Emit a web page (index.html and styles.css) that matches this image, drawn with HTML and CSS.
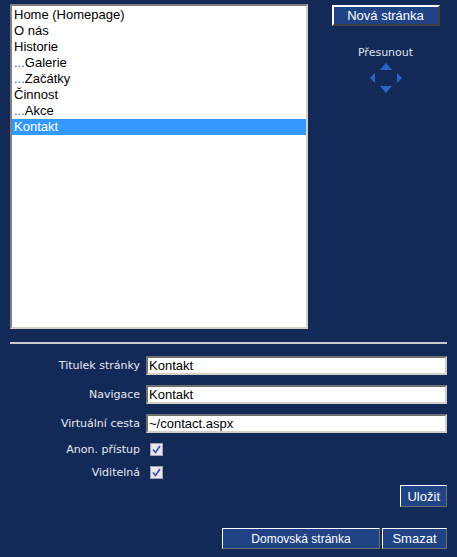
FILE: index.html
```html
<!DOCTYPE html>
<html lang="cs">
<head>
  <meta charset="UTF-8" />
  <title>Stránky webu</title>
  <link rel="stylesheet" href="styles.css">
</head>
<body>
  <div class="page">
    <div class="top">
      <div class="pagelist">
        <div class="item">Home (Homepage)</div>
        <div class="item">O nás</div>
        <div class="item">Historie</div>
        <div class="item"><span class="dots">...</span>Galerie</div>
        <div class="item"><span class="dots">...</span>Začátky</div>
        <div class="item">Činnost</div>
        <div class="item"><span class="dots">...</span>Akce</div>
        <div class="item selected">Kontakt</div>
      </div>

      <div class="side">
        <button class="btn new-btn">Nová stránka</button>
        <div class="move">
          <span class="move-label">Přesunout</span>
          <svg class="arrows" width="40" height="34" viewBox="0 0 40 34">
            <path d="M20 2 L26 9 L14 9 Z" />
            <path d="M4 17 L9 12 L9 22 Z" />
            <path d="M36 17 L31 12 L31 22 Z" />
            <path d="M20 32 L26 25 L14 25 Z" />
          </svg>
        </div>
      </div>
    </div>

    <hr class="divider">

    <div class="props">
      <label class="prop-label" for="title">Titulek stránky</label>
      <input class="prop-input" type="text" id="title" value="Kontakt">

      <label class="prop-label" for="nav">Navigace</label>
      <input class="prop-input" type="text" id="nav" value="Kontakt">

      <label class="prop-label" for="path">Virtuální cesta</label>
      <input class="prop-input" type="text" id="path" value="~/contact.aspx">

      <span class="prop-label">Anon. přístup</span>
      <span class="check">
        <svg width="9" height="9" viewBox="0 0 9 9"><path d="M1 4.5 L3.5 7.5 L8 1" /></svg>
      </span>

      <span class="prop-label">Viditelná</span>
      <span class="check">
        <svg width="9" height="9" viewBox="0 0 9 9"><path d="M1 4.5 L3.5 7.5 L8 1" /></svg>
      </span>
    </div>

    <div class="save-row">
      <button class="btn save-btn">Uložit</button>
    </div>

    <div class="actions">
      <button class="btn home-btn">Domovská stránka</button>
      <button class="btn delete-btn">Smazat</button>
    </div>
  </div>
</body>
</html>
```

FILE: styles.css
```css
body {
  margin: 0;
  background: #132a59;
  font-family: "Liberation Sans", Arial, sans-serif;
}
.page {
  padding: 4px 10px 0 10px;
}

/* Page list + move panel */
.top {
  display: flex;
}
.pagelist {
  width: 294px;
  height: 320px;
  background: white;
  border: 2px solid;
  border-color: #808080 #d4d0c8 #d4d0c8 #808080;
  padding-top: 1px;
  box-sizing: content-box;
}
.item {
  height: 16px;
  line-height: 16px;
  padding-left: 2px;
  font-size: 13px;
  color: #000;
}
.item .dots {
  color: #2c5fbf;
}
.item.selected {
  background: #3399ff;
  color: white;
}
.side {
  flex: 1;
  display: flex;
  flex-direction: column;
  align-items: center;
  padding-top: 1px;
  padding-left: 16px;
}
.btn {
  font-family: "Liberation Sans", Arial, sans-serif;
  font-size: 13px;
  color: white;
  background: #1f4385;
  border: 1px solid;
  border-color: #ffffff #707070 #707070 #ffffff;
  padding: 0 8px;
  height: 22px;
  cursor: pointer;
}
.new-btn {
  width: 108px;
  height: 21px;
  border-width: 2px;
  border-color: #ffffff #404040 #404040 #ffffff;
}
.move {
  display: flex;
  flex-direction: column;
  align-items: center;
  margin-top: 20px;
}
.move-label {
  font-family: "DejaVu Sans", Verdana, sans-serif;
  font-size: 11px;
  color: #dde2ee;
}
.arrows {
  margin-top: 2px;
}
.arrows path {
  fill: #2a66c9;
}

.divider {
  border: none;
  border-top: 2px solid #c8c8c8;
  margin: 13px 0 12px 0;
}

/* Properties */
.props {
  display: grid;
  grid-template-columns: 130px 1fr;
  column-gap: 6px;
  row-gap: 10px;
  align-items: center;
}
.prop-label {
  text-align: right;
  font-family: "DejaVu Sans", Verdana, sans-serif;
  font-size: 11px;
  color: #e6e9f0;
}
.prop-input {
  height: 19px;
  box-sizing: border-box;
  border: 2px solid;
  border-color: #707070 #d4d0c8 #d4d0c8 #707070;
  padding: 0 1px;
  font-family: "Liberation Sans", Arial, sans-serif;
  font-size: 13px;
  color: #000;
  background: white;
}
.check {
  width: 11px;
  height: 11px;
  margin-left: 4px;
  background: #e8e8ec;
  border: 1px solid #a0a4b0;
  display: flex;
  align-items: center;
  justify-content: center;
}
.check path {
  fill: none;
  stroke: #3b4bb0;
  stroke-width: 1.6;
}

.save-row {
  display: flex;
  justify-content: flex-end;
  margin-top: 6px;
}
.save-btn {
  padding: 0 6px;
}
.actions {
  display: flex;
  justify-content: flex-end;
  gap: 2px;
  margin-top: 21px;
}
.actions .btn {
  height: 21px;
}
.home-btn {
  width: 158px;
  font-size: 12px;
}
.delete-btn {
  width: 65px;
  padding: 0;
}
```
